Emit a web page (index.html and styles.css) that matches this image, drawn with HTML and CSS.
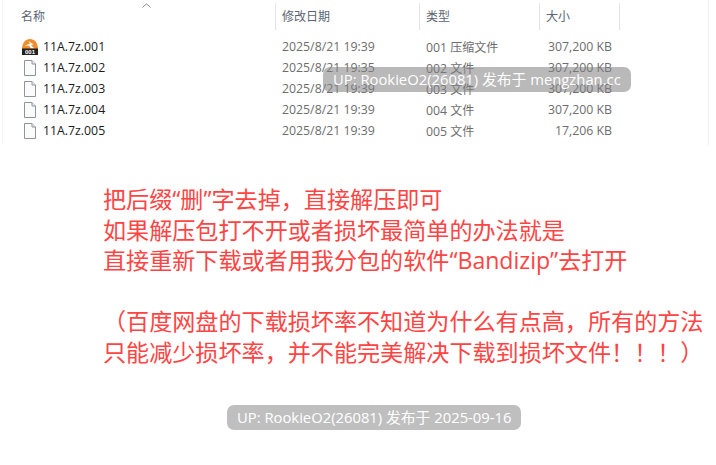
FILE: index.html
```html
<!DOCTYPE html>
<html lang="zh">
<head>
<meta charset="utf-8">
<title>11A.7z</title>
<link rel="stylesheet" href="styles.css">
</head>
<body>
<main class="shot">
  <section class="explorer">
    <svg class="sort" width="9" height="5" viewBox="0 0 9 5"><path d="M.5 4.500 4.500.8l4 3.700" fill="none" stroke="#8a8a8a"/></svg>
    <div class="row head">
      <div class="cell c-name">名称</div>
      <div class="cell c-date">修改日期</div>
      <div class="cell c-type">类型</div>
      <div class="cell c-size">大小</div>
    </div>
    <div class="rows">
      <div class="row">
        <div class="cell c-name">
          <svg class="ico" width="16" height="16" viewBox="0 0 16 16"><path d="M0 10C0 4 3.500 0 8 0s8 4 8 10z" fill="#f08c2a"/><path d="M2.500 7 8 4.500 6.500 2l5 3.500-2.500.5 3.500 3.500H9L7 6.500z" fill="#fff"/><rect y="9.500" width="16" height="6.500" fill="#202020"/><text class="ico-t" x="8" y="15">001</text></svg>
          <span class="fn">11A.7z.001</span>
        </div>
        <div class="cell c-date">2025/8/21 19:39</div>
        <div class="cell c-type">001 <span class="zh">压缩文件</span></div>
        <div class="cell c-size">307,200 KB</div>
      </div>
      <div class="row">
        <div class="cell c-name">
          <svg class="ico" width="16" height="16" viewBox="0 0 16 16"><path class="doc" d="M2.500.5h7.500l3.500 3.500v11.500h-11z"/><path class="fold" d="M10 .5v3.500h3.500"/></svg>
          <span class="fn">11A.7z.002</span>
        </div>
        <div class="cell c-date">2025/8/21 19:35</div>
        <div class="cell c-type">002 <span class="zh">文件</span></div>
        <div class="cell c-size">307,200 KB</div>
      </div>
      <div class="row">
        <div class="cell c-name">
          <svg class="ico" width="16" height="16" viewBox="0 0 16 16"><path class="doc" d="M2.500.5h7.500l3.500 3.500v11.500h-11z"/><path class="fold" d="M10 .5v3.500h3.500"/></svg>
          <span class="fn">11A.7z.003</span>
        </div>
        <div class="cell c-date">2025/8/21 19:39</div>
        <div class="cell c-type">003 <span class="zh">文件</span></div>
        <div class="cell c-size">307,200 KB</div>
      </div>
      <div class="row">
        <div class="cell c-name">
          <svg class="ico" width="16" height="16" viewBox="0 0 16 16"><path class="doc" d="M2.500.5h7.500l3.500 3.500v11.500h-11z"/><path class="fold" d="M10 .5v3.500h3.500"/></svg>
          <span class="fn">11A.7z.004</span>
        </div>
        <div class="cell c-date">2025/8/21 19:39</div>
        <div class="cell c-type">004 <span class="zh">文件</span></div>
        <div class="cell c-size">307,200 KB</div>
      </div>
      <div class="row">
        <div class="cell c-name">
          <svg class="ico" width="16" height="16" viewBox="0 0 16 16"><path class="doc" d="M2.500.5h7.500l3.500 3.500v11.500h-11z"/><path class="fold" d="M10 .5v3.500h3.500"/></svg>
          <span class="fn">11A.7z.005</span>
        </div>
        <div class="cell c-date">2025/8/21 19:39</div>
        <div class="cell c-type">005 <span class="zh">文件</span></div>
        <div class="cell c-size">17,206 KB</div>
      </div>
    </div>
  </section>
  <section class="note">
    <p>把后缀“删”字去掉，直接解压即可</p>
    <p>如果解压包打不开或者损坏最简单的办法就是</p>
    <p>直接重新下载或者用我分包的软件“Bandizip”去打开</p>
    <p>&nbsp;</p>
    <p>（百度网盘的下载损坏率不知道为什么有点高，所有的方法</p>
    <p>只能减少损坏率，并不能完美解决下载到损坏文件！！！）</p>
  </section>
  <div class="mark mark-top">UP: RookieO2(26081) 发布于 mengzhan.cc</div>
  <div class="mark mark-bottom">UP: RookieO2(26081) 发布于 2025-09-16</div>
</main>
</body>
</html>
```
FILE: styles.css
```css
* { box-sizing: border-box; }
html, body { margin: 0; padding: 0; background: #fff; }
.shot {
  position: relative;
  width: 716px;
  height: 465px;
  overflow: hidden;
  font-family: "Open Sans", "Noto Sans CJK SC", sans-serif;
}
.explorer {
  position: relative;
  margin-left: 2px;
  width: 707px;
  height: 145px;
  padding-top: 3px;
  border-left: 1px solid #f4f4f4;
  border-right: 1px solid #f0f0f0;
}
.sort { position: absolute; left: 139px; top: 3px; }
.row {
  display: grid;
  grid-template-columns: 273px 144px 120px 80px;
  height: 21px;
  align-items: center;
  font-size: 12.3px;
  color: #6d6d6d;
}
.row.head { height: 27px; margin-bottom: 6px; align-items: stretch; font-size: 12px; }
.head .cell {
  display: flex;
  align-items: center;
  padding-bottom: 1px;
  border-right: 1px solid #e5e5e5;
  color: #5a6472;
}
.cell { padding-left: 6px; white-space: nowrap; }
.zh { font-size: 12px; }
.c-name { display: flex; align-items: center; padding-left: 19px; gap: 5px; }
.head .c-name { padding-left: 18px; }
.row:not(.head) .c-size { text-align: right; padding-right: 8px; padding-left: 0; }
.fn { color: #1a1a1a; }
.ico { flex: none; }
.ico-t { fill: #fff; font: 700 6px "Liberation Sans", sans-serif; text-anchor: middle; }
.doc { fill: #fbfbfb; stroke: #8f949a; }
.fold { fill: #eef0f2; stroke: #8f949a; }
.note {
  margin-top: 39px;
  padding-left: 103px;
  font-size: 23.1px;
  line-height: 30.5px;
  color: #ff4444;
  white-space: nowrap;
}
.note p { margin: 0; }
.mark {
  position: absolute;
  height: 25px;
  line-height: 24px;
  padding: 0 10px;
  border-radius: 7px;
  font-size: 14.8px;
  color: #fff;
  background: rgba(128, 128, 128, 0.5);
  white-space: nowrap;
}
.mark-top { left: 323px; top: 67px; background: rgba(128,128,128,.55); }
.mark-bottom { left: 227px; top: 405px; }
```
